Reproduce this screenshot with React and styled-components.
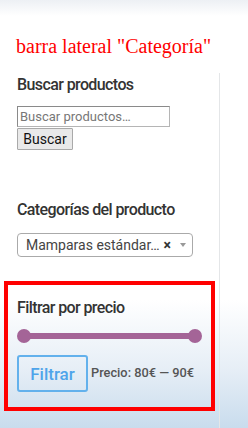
import React from "react";
import styled, { createGlobalStyle } from "styled-components";

const GlobalStyle = createGlobalStyle`
  html, body {
    margin: 0;
    padding: 0;
  }
  body {
    width: 248px;
    height: 428px;
    overflow: hidden;
    font-family: Roboto, "Liberation Sans", sans-serif;
    background:
      linear-gradient(to bottom, #edf0f4 0px, #ffffff 16px, #ffffff 300px, #e6eef6 370px, #c9dced 428px);
  }
`;

const Page = styled.div`
  width: 248px;
  height: 428px;
  padding-top: 34px;
  box-sizing: border-box;
`;

const PageTitle = styled.h1`
  margin: 0 0 15px 16px;
  font-family: "Liberation Serif", "Times New Roman", serif;
  font-weight: 400;
  font-size: 20px;
  line-height: 24px;
  color: #ff0000;
`;

const Sidebar = styled.aside`
  width: 220px;
  height: 355px;
  box-sizing: border-box;
  padding: 2px 27px 0 17px;
  border-right: 1px solid #e4e6e8;
`;

const Widget = styled.section`
  margin-bottom: ${(p) => p.$gap || 0}px;
`;

const WidgetTitle = styled.h3`
  margin: 0 0 ${(p) => p.$below || 11}px;
  font-family: Roboto, "Liberation Sans", sans-serif;
  font-weight: 500;
  font-size: 16px;
  line-height: 20px;
  letter-spacing: -0.6px;
  color: #333;
`;

const SearchInput = styled.input`
  display: block;
  width: 153px;
  height: 21px;
  box-sizing: border-box;
  margin: 0 0 1px;
  padding: 0 2px;
  border: 1px solid #b5b5b5;
  border-top-color: #8a8a8a;
  border-left-color: #8a8a8a;
  font-family: Roboto, "Liberation Sans", sans-serif;
  font-size: 13px;
  color: #333;
  background: #fff;
  &::placeholder {
    color: #777;
  }
`;

const PlainButton = styled.button`
  display: block;
  width: 56px;
  height: 22px;
  padding: 0;
  border: 1px solid #a9a9a9;
  border-radius: 1px;
  background: #e9e9e9;
  font-family: Roboto, "Liberation Sans", sans-serif;
  font-size: 14px;
  color: #111;
`;

const Select = styled.div`
  display: flex;
  align-items: center;
  width: 176px;
  height: 24px;
  box-sizing: border-box;
  padding: 0 6px 0 8px;
  border: 1px solid #aaa;
  border-radius: 4px;
  background: #fff;
`;

const SelectText = styled.span`
  flex: 1;
  font-size: 14px;
  color: #444;
  white-space: nowrap;
`;

const Clear = styled.span`
  font-size: 14px;
  font-weight: 700;
  color: #333;
  margin: 0 9px 0 1px;
`;

const Arrow = styled.span`
  width: 0;
  height: 0;
  border-left: 3px solid transparent;
  border-right: 3px solid transparent;
  border-top: 4px solid #999;
`;

const Highlight = styled.section`
  margin: 0 -23px 0 -13px;
  padding: 13px 9px 15px;
  border: 4px solid #ff0000;
`;

const Slider = styled.div`
  position: relative;
  height: 14px;
  margin: 4px 0 12px;
  display: flex;
  align-items: center;
`;

const Track = styled.div`
  flex: 1;
  height: 6px;
  margin: 0 7px;
  background: #a46497;
`;

const Handle = styled.span`
  position: absolute;
  top: 0;
  ${(p) => (p.$right ? "right: 0;" : "left: 0;")}
  width: 14px;
  height: 14px;
  border-radius: 50%;
  background: #a46497;
`;

const PriceRow = styled.div`
  display: flex;
  align-items: center;
  gap: 3px;
`;

const FilterButton = styled.button`
  width: 71px;
  height: 37px;
  padding: 0;
  border: 2px solid #63b1ec;
  border-radius: 3px;
  background: transparent;
  font-family: Roboto, "Liberation Sans", sans-serif;
  font-size: 17px;
  font-weight: 500;
  color: #4ea4ea;
`;

const PriceLabel = styled.span`
  font-size: 12.8px;
  font-weight: 500;
  color: #555;
  margin-bottom: 3px;
`;

export default function App() {
  return (
    <>
      <GlobalStyle />
      <Page>
        <PageTitle>barra lateral "Categoría"</PageTitle>
        <Sidebar>
          <Widget $gap={50}>
            <WidgetTitle $below={11}>Buscar productos</WidgetTitle>
            <SearchInput placeholder="Buscar productos…" />
            <PlainButton>Buscar</PlainButton>
          </Widget>
          <Widget $gap={24}>
            <WidgetTitle $below={13}>Categorías del producto</WidgetTitle>
            <Select>
              <SelectText>Mamparas estándar…</SelectText>
              <Clear>×</Clear>
              <Arrow />
            </Select>
          </Widget>
          <Highlight>
            <WidgetTitle $below={0}>Filtrar por precio</WidgetTitle>
            <Slider>
              <Handle />
              <Track />
              <Handle $right />
            </Slider>
            <PriceRow>
              <FilterButton>Filtrar</FilterButton>
              <PriceLabel>Precio: 80€ — 90€</PriceLabel>
            </PriceRow>
          </Highlight>
        </Sidebar>
      </Page>
    </>
  );
}
